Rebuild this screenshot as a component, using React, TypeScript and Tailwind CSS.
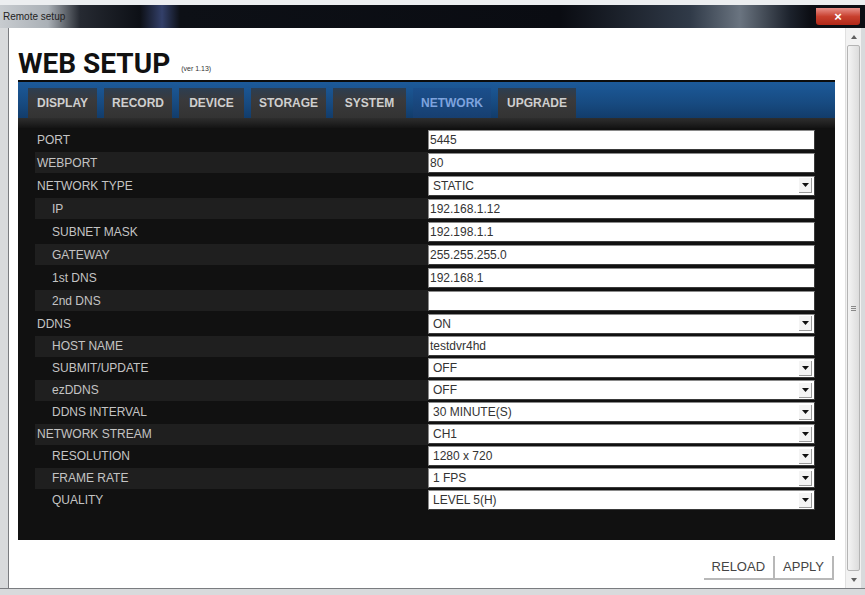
import { ReactNode } from 'react'

type Row = { label: string; value: string; indent?: boolean; select?: boolean; tall: boolean }

const rows: Row[] = [
    { label: 'PORT', value: '5445', tall: true },
    { label: 'WEBPORT', value: '80', tall: true },
    { label: 'NETWORK TYPE', value: 'STATIC', select: true, tall: true },
    { label: 'IP', value: '192.168.1.12', indent: true, tall: true },
    { label: 'SUBNET MASK', value: '192.198.1.1', indent: true, tall: true },
    { label: 'GATEWAY', value: '255.255.255.0', indent: true, tall: true },
    { label: '1st DNS', value: '192.168.1', indent: true, tall: true },
    { label: '2nd DNS', value: '', indent: true, tall: true },
    { label: 'DDNS', value: 'ON', select: true, tall: true },
    { label: 'HOST NAME', value: 'testdvr4hd', indent: true, tall: false },
    { label: 'SUBMIT/UPDATE', value: 'OFF', indent: true, select: true, tall: false },
    { label: 'ezDDNS', value: 'OFF', indent: true, select: true, tall: false },
    { label: 'DDNS INTERVAL', value: '30 MINUTE(S)', indent: true, select: true, tall: false },
    { label: 'NETWORK STREAM', value: 'CH1', select: true, tall: false },
    { label: 'RESOLUTION', value: '1280 x 720', indent: true, select: true, tall: false },
    { label: 'FRAME RATE', value: '1 FPS', indent: true, select: true, tall: false },
    { label: 'QUALITY', value: 'LEVEL 5(H)', indent: true, select: true, tall: false },
]

const tabs = [
    { name: 'DISPLAY', w: 'w-[69px]' },
    { name: 'RECORD', w: 'w-[68px]' },
    { name: 'DEVICE', w: 'w-[65px]' },
    { name: 'STORAGE', w: 'w-[75px]' },
    { name: 'SYSTEM', w: 'w-[73px]' },
    { name: 'NETWORK', w: 'w-[78px]', active: true },
    { name: 'UPGRADE', w: 'w-[78px]' },
]

function Field({ value, select }: { value: string; select?: boolean }) {
    return (
        <div className="flex h-[20px] w-[387px] items-center border border-[#8a8a8a] border-b-[#3a3a3a] border-r-[#3a3a3a] bg-white text-[12px] text-[#333]">
            <span className={select ? 'pl-[4px]' : 'pl-[1px]'}>{value}</span>
            {select && (
                <div className="ml-auto mr-[2px] flex h-[15px] w-[13px] items-center justify-center border-b border-r border-[#9a9a9a] bg-[#f4f4f4]">
                    <svg width="7" height="4" viewBox="0 0 7 4">
                        <path d="M0 0 H7 L3.5 4 Z" fill="#111" />
                    </svg>
                </div>
            )}
        </div>
    )
}

function Button({ children }: { children: ReactNode }) {
    return (
        <button
            type="button"
            className="h-[24px] border-b-2 border-r-2 border-[#b8b8b8] bg-white px-[8px] text-[13px] text-[#444]"
        >
            {children}
        </button>
    )
}

export default function App() {
    return (
        <div className="flex h-[595px] w-[865px] flex-col overflow-hidden bg-[#d4d6d8] font-['Liberation_Sans',Arial,sans-serif]">
            {/* window title bar */}
            <div className="h-[5px] bg-[#eceef0]" />
            <div className="flex h-[23px] items-center bg-[linear-gradient(90deg,#c8ccd0_0px,#aab0b6_48px,#262a32_80px,#0d1016_140px,#33406a_162px,#0d1016_180px,#0a0c12_560px,#303a48_690px,#6a7480_740px,#1c222c_790px,#0c0e14_810px)]">
                <span className="pl-[3px] text-[10px] text-[#222]">Remote setup</span>
                <div className="ml-auto mr-[5px] flex h-[17px] w-[44px] items-center justify-center rounded-b-[3px] bg-[linear-gradient(180deg,#e8908a,#c8402e_50%,#b02818)] text-[13px] font-bold leading-none text-white">
                    ×
                </div>
            </div>

            <div className="flex h-[560px]">
                {/* left frame */}
                <div className="w-[9px] border-r border-[#7a7c80] bg-[#d8dadc]" />

                {/* page */}
                <div className="flex w-[836px] flex-col bg-white">
                    <div className="flex h-[52px] items-end pb-[2px] pl-[9px]">
                        <span className="font-['Roboto',sans-serif] text-[28px] font-bold leading-none text-[#111]">WEB SETUP</span>
                        <span className="mb-[4px] ml-[11px] text-[7px] text-[#333]">(ver 1.13)</span>
                    </div>

                    <div className="ml-[9px] flex h-[460px] w-[817px] flex-col border-t-2 border-[#0c0c0c] bg-[#111]">
                        {/* tabs */}
                        <div className="flex h-[36px] items-end gap-[7px] bg-[linear-gradient(180deg,#1c5a9a,#174a80_60%,#123c6a)] px-[10px]">
                            {tabs.map((t) => (
                                <div
                                    key={t.name}
                                    className={
                                        t.active
                                            ? `${t.w} flex h-[30px] items-center justify-center bg-[linear-gradient(180deg,#1b4f8c,#173f70)] text-[12px] font-bold text-[#7ea3de]`
                                            : `${t.w} flex h-[30px] items-center justify-center bg-[linear-gradient(180deg,#2c3e52,#3a3a3c_40%,#333)] text-[12px] font-bold text-[#cfcfcf]`
                                    }
                                >
                                    {t.name}
                                </div>
                            ))}
                        </div>
                        <div className="h-[10px] bg-[linear-gradient(180deg,#2e2e2e,#141414)]" />

                        {/* rows */}
                        <div className="flex flex-col">
                            {rows.map((r, i) => (
                                <div key={r.label} className={r.tall ? 'flex h-[23px] items-center' : 'flex h-[22px] items-center'}>
                                    <div className="flex h-full w-[410px] items-center pl-[17px]">
                                        <div
                                            className={
                                                i % 2 === 1
                                                    ? 'flex h-[21px] flex-1 items-center bg-[#1f1f1f]'
                                                    : 'flex h-[21px] flex-1 items-center'
                                            }
                                        >
                                            <span
                                                className={
                                                    r.indent
                                                        ? 'pl-[17px] text-[12px] text-[#c4c4c4]'
                                                        : 'pl-[2px] text-[12px] text-[#c4c4c4]'
                                                }
                                            >
                                                {r.label}
                                            </span>
                                        </div>
                                    </div>
                                    <Field value={r.value} select={r.select} />
                                </div>
                            ))}
                        </div>
                    </div>

                    <div className="mr-[11px] mt-[16px] flex justify-end">
                        <Button>RELOAD</Button>
                        <Button>APPLY</Button>
                    </div>
                </div>

                {/* scrollbar */}
                <div className="flex w-[16px] flex-col items-center border-l border-[#e0e0e0] bg-[#f2f2f2]">
                    <div className="flex h-[17px] items-center justify-center">
                        <svg width="6" height="4" viewBox="0 0 6 4">
                            <path d="M0 4 L3 0 L6 4 Z" fill="#606060" />
                        </svg>
                    </div>
                    <div className="flex w-[13px] flex-1 items-center justify-center rounded-[2px] border border-[#b4b4b4] bg-[linear-gradient(90deg,#f4f4f4,#dcdcdc)]">
                        <div className="flex flex-col gap-[1px]">
                            <div className="h-[1px] w-[5px] bg-[#888]" />
                            <div className="h-[1px] w-[5px] bg-[#888]" />
                            <div className="h-[1px] w-[5px] bg-[#888]" />
                        </div>
                    </div>
                    <div className="flex h-[17px] items-center justify-center">
                        <svg width="6" height="4" viewBox="0 0 6 4">
                            <path d="M0 0 L6 0 L3 4 Z" fill="#606060" />
                        </svg>
                    </div>
                </div>

                {/* right frame */}
                <div className="w-[4px] bg-[#d8dadc]" />
            </div>

            <div className="h-[7px] border-t border-[#7a7c80] bg-[#d8dadc]" />
        </div>
    )
}
